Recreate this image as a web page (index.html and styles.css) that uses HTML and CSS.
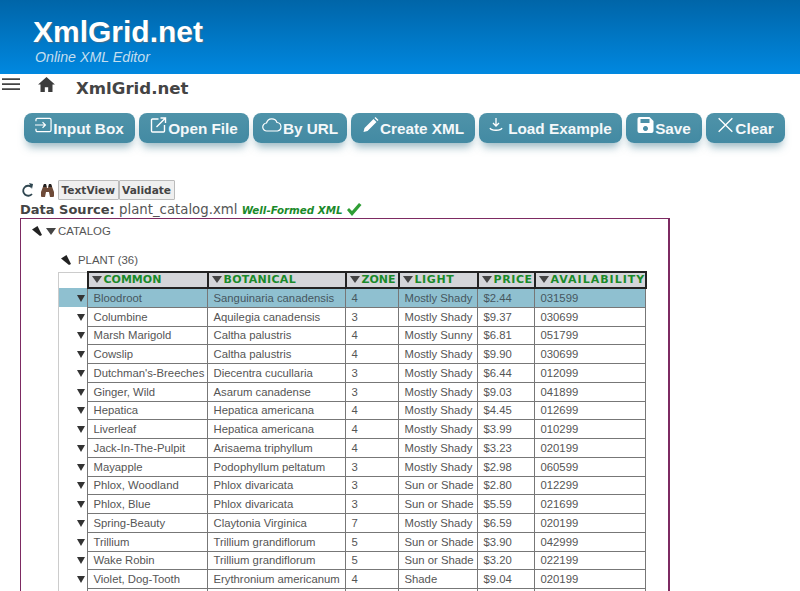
FILE: index.html
```html
<!DOCTYPE html>
<html lang="en">
<head>
<meta charset="utf-8">
<title>XmlGrid.net</title>
<link rel="stylesheet" href="styles.css">
</head>
<body>
<header class="banner">
  <div class="logo">XmlGrid.net</div>
  <div class="tagline">Online XML Editor</div>
</header>
<div class="nav">
  <svg class="menu" viewBox="0 0 18 13"><path d="M0 1.2h18M0 6.2h18M0 11.2h18" stroke="#444" stroke-width="1.7" fill="none"/></svg>
  <svg class="home" viewBox="0 0 18 16"><path d="M9 0L0 8h2.600v8h4.600v-5h3.600v5h4.600V8H18z" fill="#3c3c3c"/></svg>
  <span class="site">XmlGrid.net</span>
</div>
<div class="buttons">
  <a class="btn b1"><svg class="ico" viewBox="0 0 18 16"><path d="M1 4V2.500A1.500 1.500 0 0 1 2.500 1h13A1.500 1.500 0 0 1 17 2.500v11a1.500 1.500 0 0 1-1.500 1.500h-13A1.500 1.500 0 0 1 1 13.500V12M0 8h11M8 5l3 3-3 3" fill="none" stroke="#fff" stroke-width="1.300"/></svg>Input Box</a>
  <a class="btn b2"><svg class="ico" viewBox="0 0 16 16"><path d="M8 2H2a1 1 0 0 0-1 1v11a1 1 0 0 0 1 1h11a1 1 0 0 0 1-1V8M6 10l9-9M10 1h5v5" fill="none" stroke="#fff" stroke-width="1.400"/></svg>Open File</a>
  <a class="btn b3"><svg class="ico wide" viewBox="0 0 20 14"><path d="M5 13a4 4 0 0 1-.5-8A5.500 5.500 0 0 1 15 4.500a4.300 4.300 0 0 1 .5 8.500z" fill="none" stroke="#fff" stroke-width="1.200"/></svg>By URL</a>
  <a class="btn b4"><svg class="ico" viewBox="0 0 16 16"><path d="M1 15l1-4L11 2l3 3-9 9zM12 1l1-1 3 3-1 1z" fill="#fff"/></svg>Create XML</a>
  <a class="btn b5"><svg class="ico small" viewBox="0 0 14 14"><path d="M7 0v8M4 5l3 3 3-3M1 10c1 3 11 3 12 0" fill="none" stroke="#fff" stroke-width="1.300"/></svg>Load Example</a>
  <a class="btn b6"><svg class="ico" viewBox="0 0 16 16"><path d="M2 0h10l4 4v10a2 2 0 0 1-2 2H2a2 2 0 0 1-2-2V2a2 2 0 0 1 2-2zM3 2v4h9V2zm5 7a2.500 2.500 0 1 0 .01 0z" fill="#fff" fill-rule="evenodd"/></svg>Save</a>
  <a class="btn b7"><svg class="ico" viewBox="0 0 14 14"><path d="M1 1l12 12M13 1L1 13" stroke="#fff" stroke-width="1.200"/></svg>Clear</a>
</div>
<div class="tools">
  <svg class="reload" viewBox="0 0 12 15"><path d="M9.500 4A5 5 0 1 0 10 11" fill="none" stroke="#2f4650" stroke-width="1.800"/><path d="M7 0l4 1-1 5z" fill="#2f4650"/></svg>
  <svg class="binoc" viewBox="0 0 15 13"><path d="M4 0h2l1 4h1l1-4h2l3 8v4a1 1 0 0 1-1 1h-3l-1-5H6l-1 5H2a1 1 0 0 1-1-1V8z" fill="#6e4a38"/><path d="M4 0h2l.500 3H3zM9 0h2l1 3H8.500z" fill="#222"/></svg>
  <button class="tool">TextView</button><button class="tool">Validate</button>
</div>
<div class="source"><b>Data Source:</b> <span class="file">plant_catalog.xml</span> <em>Well-Formed XML</em><svg class="check" viewBox="0 0 16 13"><path d="M1 7l2-2 3 3 7-8 2.500 2L6 13z" fill="#2f9e35"/></svg></div>
<main class="frame">
  <div class="tree catalog"><svg class="wedge" viewBox="0 0 10 10"><path d="M0 3.500L5.500 0 10 9 8 10z" fill="#222"/></svg><span class="down"></span>CATALOG</div>
  <div class="tree plant"><svg class="wedge" viewBox="0 0 10 10"><path d="M0 3.500L5.500 0 10 9 8 10z" fill="#222"/></svg>PLANT <span class="count">(36)</span></div>
  <table class="grid">
    <colgroup><col class="c0"><col class="c1"><col class="c2"><col class="c3"><col class="c4"><col class="c5"><col class="c6"></colgroup>
    <thead>
      <tr><td class="blank"></td><th><span class="down"></span>COMMON</th><th class="h-bot"><span class="down"></span>BOTANICAL</th><th><span class="down"></span>ZONE</th><th class="h-light"><span class="down"></span>LIGHT</th><th class="h-price"><span class="down"></span>PRICE</th><th class="h-avail"><span class="down"></span>AVAILABILITY</th></tr>
    </thead>
    <tbody>
      <tr class="sel"><td class="mark"><span class="down big"></span></td><td>Bloodroot</td><td>Sanguinaria canadensis</td><td>4</td><td>Mostly Shady</td><td>$2.44</td><td>031599</td></tr>
      <tr><td class="mark"><span class="down big"></span></td><td>Columbine</td><td>Aquilegia canadensis</td><td>3</td><td>Mostly Shady</td><td>$9.37</td><td>030699</td></tr>
      <tr><td class="mark"><span class="down big"></span></td><td>Marsh Marigold</td><td>Caltha palustris</td><td>4</td><td>Mostly Sunny</td><td>$6.81</td><td>051799</td></tr>
      <tr><td class="mark"><span class="down big"></span></td><td>Cowslip</td><td>Caltha palustris</td><td>4</td><td>Mostly Shady</td><td>$9.90</td><td>030699</td></tr>
      <tr><td class="mark"><span class="down big"></span></td><td>Dutchman's-Breeches</td><td>Diecentra cucullaria</td><td>3</td><td>Mostly Shady</td><td>$6.44</td><td>012099</td></tr>
      <tr><td class="mark"><span class="down big"></span></td><td>Ginger, Wild</td><td>Asarum canadense</td><td>3</td><td>Mostly Shady</td><td>$9.03</td><td>041899</td></tr>
      <tr><td class="mark"><span class="down big"></span></td><td>Hepatica</td><td>Hepatica americana</td><td>4</td><td>Mostly Shady</td><td>$4.45</td><td>012699</td></tr>
      <tr><td class="mark"><span class="down big"></span></td><td>Liverleaf</td><td>Hepatica americana</td><td>4</td><td>Mostly Shady</td><td>$3.99</td><td>010299</td></tr>
      <tr><td class="mark"><span class="down big"></span></td><td>Jack-In-The-Pulpit</td><td>Arisaema triphyllum</td><td>4</td><td>Mostly Shady</td><td>$3.23</td><td>020199</td></tr>
      <tr><td class="mark"><span class="down big"></span></td><td>Mayapple</td><td>Podophyllum peltatum</td><td>3</td><td>Mostly Shady</td><td>$2.98</td><td>060599</td></tr>
      <tr><td class="mark"><span class="down big"></span></td><td>Phlox, Woodland</td><td>Phlox divaricata</td><td>3</td><td>Sun or Shade</td><td>$2.80</td><td>012299</td></tr>
      <tr><td class="mark"><span class="down big"></span></td><td>Phlox, Blue</td><td>Phlox divaricata</td><td>3</td><td>Sun or Shade</td><td>$5.59</td><td>021699</td></tr>
      <tr><td class="mark"><span class="down big"></span></td><td>Spring-Beauty</td><td>Claytonia Virginica</td><td>7</td><td>Mostly Shady</td><td>$6.59</td><td>020199</td></tr>
      <tr><td class="mark"><span class="down big"></span></td><td>Trillium</td><td>Trillium grandiflorum</td><td>5</td><td>Sun or Shade</td><td>$3.90</td><td>042999</td></tr>
      <tr><td class="mark"><span class="down big"></span></td><td>Wake Robin</td><td>Trillium grandiflorum</td><td>5</td><td>Sun or Shade</td><td>$3.20</td><td>022199</td></tr>
      <tr><td class="mark"><span class="down big"></span></td><td>Violet, Dog-Tooth</td><td>Erythronium americanum</td><td>4</td><td>Shade</td><td>$9.04</td><td>020199</td></tr>
      <tr><td class="mark"></td><td></td><td></td><td></td><td></td><td></td><td></td></tr>
    </tbody>
  </table>
</main>
</body>
</html>
```
FILE: styles.css
```css
html, body { margin: 0; padding: 0; height: 591px; overflow: hidden; background: #fff; }
body { font-family: "Liberation Sans", Arial, sans-serif; color: #555; }

.banner { height: 74px; box-sizing: border-box; padding: 17px 0 0 33px; background: linear-gradient(#0065a8, #0088e0); }
.logo { font: bold 30px/30px "Liberation Sans", sans-serif; color: #fff; text-shadow: 1px 1px 1px #4a6f8a; }
.tagline { margin: 1px 0 0 2px; font: italic 14.200px/18px "Liberation Sans", sans-serif; color: #c4deef; }

.nav { height: 39px; display: flex; align-items: flex-start; }
.menu { width: 18px; height: 13px; margin: 4px 0 0 2px; }
.home { width: 17px; height: 15px; margin: 3px 0 0 18px; }
.site { margin: 5px 0 0 21px; font: bold 16.600px/20px "DejaVu Sans", sans-serif; color: #444; }

.buttons { display: flex; gap: 4px; padding-left: 24px; height: 30px; }
.btn { height: 30px; box-sizing: border-box; padding-top: 2px; border-radius: 8px; display: flex; align-items: center; justify-content: center;
  background: linear-gradient(#4f93a9, #438aa3); color: #f4f8fa; font-weight: bold; font-size: 15.300px; white-space: nowrap;
  box-shadow: 0 7px 9px -3px rgba(70, 125, 145, .55); }
.b1 { width: 111px; } .b2 { width: 110px; } .b3 { width: 94px; } .b4 { width: 124px; }
.b5 { width: 143px; } .b6 { width: 76px; } .b7 { width: 79px; }
.ico { width: 17px; height: 16px; margin: -9px 1px 0 0; flex: none; }
.ico.wide { width: 20px; height: 14px; }
.ico.small { width: 14px; height: 14px; margin-right: 5px; }

.tools { display: flex; align-items: center; height: 20px; margin-top: 37px; padding-left: 22px; }
.reload { width: 12px; height: 15px; }
.binoc { width: 15px; height: 13px; margin: 0 3px 0 6px; }
.tool { height: 20px; padding: 0 2.500px; margin: 0; border: 1px solid #bbb; border-radius: 1px; background: #efefef;
  font: bold 10.600px/16px "DejaVu Sans", sans-serif; color: #444; }

.source { margin: 1px 0 0 20px; height: 17px; font: 13.300px/17px "DejaVu Sans", sans-serif; color: #555; white-space: nowrap; }
.source b { color: #444; font-size: 13px; }
.source em { font-weight: bold; font-size: 10.300px; color: #1a8a2a; }
.check { width: 16px; height: 13px; margin-left: 4px; vertical-align: -2px; }

.frame { margin-left: 20px; width: 647px; height: 400px; border: 1px solid #7d2a62; border-width: 1px 2px 0 1px; }
.tree { font-size: 11.400px; line-height: 14px; color: #555; display: flex; align-items: center; }
.catalog { padding: 5px 0 0 11px; }
.plant { padding: 15px 0 0 40px; }
.count { margin-left: 3px; }
.wedge { width: 10px; height: 10px; margin-right: 4px; }
.plant .wedge { margin-right: 7px; }
.down { width: 0; height: 0; display: inline-block; margin-right: 2px; border-top: 7px solid #444; border-left: 5px solid transparent; border-right: 5px solid transparent; }
.down.big { border-top-width: 7px; border-left-width: 4.500px; border-right-width: 4.500px; border-top-color: #333; }

.grid { margin: 4px 0 0 37px; table-layout: fixed; width: 587px; border-collapse: collapse; font-size: 11.300px; }
.c0 { width: 29px; } .c1 { width: 120px; } .c2 { width: 138px; } .c3 { width: 53px; }
.c4 { width: 79px; } .c5 { width: 57px; } .c6 { width: 111px; }
.grid th { height: 14px; padding: 0 0 0 3px; border: 2px solid #222; background: #d4d5d9; color: #1a8a2a; text-align: left; white-space: nowrap;
  font: bold 11px/14px "DejaVu Sans", sans-serif; }
.grid th .down { margin-right: 2px; }
.grid .h-bot { letter-spacing: .3px; }
.grid .h-light { letter-spacing: .6px; }
.grid .h-price { letter-spacing: .6px; }
.grid .h-avail { letter-spacing: 1px; }
.grid .blank { border: 0; border-top: 1px solid #ccc; border-left: 1px solid #ccc; padding: 0; height: 14px; }
.grid td { height: 17.750px; padding: 0 0 0 5.500px; border: 1px solid #777; white-space: nowrap; overflow: hidden; line-height: 14px; color: #555; }
.grid .mark { border: 0; border-left: 1px solid #ccc; text-align: right; padding: 0; }
.grid .sel td { background: #8fc0d0; color: #46575f; }
```
